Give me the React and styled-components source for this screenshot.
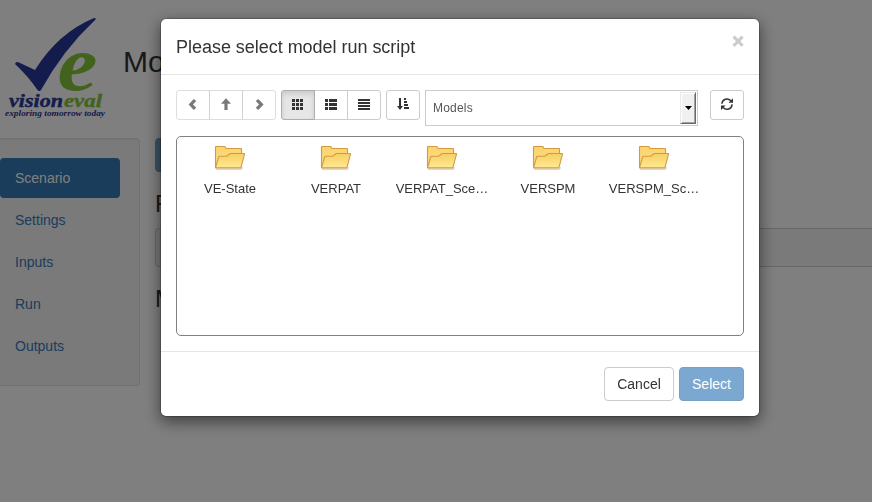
import React from "react";
import styled, { createGlobalStyle, css } from "styled-components";

const Global = createGlobalStyle`
  * { box-sizing: border-box; }
  body {
    margin: 0;
    height: 502px;
    overflow: hidden;
    background: #fff;
    color: #333;
    font: 14px/20px "Liberation Sans", Arial, sans-serif;
  }
  #root { height: 100%; }
`;

const Page = styled.div`
  height: 502px;
  width: 872px;
  overflow: hidden;
`;

const Masthead = styled.header`
  display: flex;
  height: 138px;
`;

const Logo = styled.svg`
  flex: none;
  width: 123px;
  height: 130px;
`;

const PageTitle = styled.h1`
  margin: 44px 0 0;
  font-size: 30px;
  font-weight: 400;
  line-height: 36px;
  white-space: nowrap;
`;

const Columns = styled.div`
  display: flex;
  gap: 15px;
`;

const Sidebar = styled.nav`
  flex: none;
  width: 140px;
  height: 248px;
  padding: 19px 19px 19px 0;
  display: flex;
  flex-direction: column;
  gap: 2px;
  background: #f5f5f5;
  border: 1px solid #e3e3e3;
  border-left: 0;
  border-radius: 0 4px 4px 0;
  box-shadow: inset 0 1px 1px rgba(0, 0, 0, 0.05);
`;

const NavItem = styled.a`
  padding: 10px 15px;
  border-radius: 4px;
  color: ${(p) => (p.$active ? "#fff" : "#337ab7")};
  background: ${(p) => (p.$active ? "#337ab7" : "transparent")};
`;

const Main = styled.main`
  flex: 1;
  min-width: 0;
`;

const PageButton = styled.button`
  display: block;
  width: 150px;
  height: 34px;
  border: 1px solid #2e6da4;
  border-radius: 4px;
  background: #337ab7;
  opacity: 0.65;
`;

const SectionTitle = styled.h3`
  margin: 19px 0 11px;
  font-size: 24px;
  font-weight: 400;
  line-height: 26px;
`;

const PathField = styled.div`
  height: 39px;
  width: 760px;
  background: #f5f5f5;
  border: 1px solid #ccc;
  border-radius: 4px;
`;

const Backdrop = styled.div`
  position: fixed;
  inset: 0;
  padding-top: 18px;
  display: flex;
  align-items: flex-start;
  background: rgba(0, 0, 0, 0.5);
`;

const Dialog = styled.section`
  width: 600px;
  margin-left: 160px;
  background: #fff;
  background-clip: padding-box;
  border: 1px solid rgba(0, 0, 0, 0.2);
  border-radius: 6px;
  box-shadow: 0 5px 15px rgba(0, 0, 0, 0.5);
`;

const DialogHeader = styled.header`
  display: flex;
  justify-content: space-between;
  padding: 15px;
  height: 56px;
  border-bottom: 1px solid #e5e5e5;
`;

const DialogTitle = styled.h4`
  margin: 0;
  font-size: 18px;
  font-weight: 400;
  line-height: 26px;
  letter-spacing: -0.03px;
`;

const CloseButton = styled.button`
  padding: 0;
  border: 0;
  height: 14px;
  background: none;
  color: #ccc;
  font: bold 20px/14px "Liberation Sans", Arial, sans-serif;
  -webkit-text-stroke: 0.8px #ccc;
`;

const DialogBody = styled.div`
  padding: 15px;
`;

const Toolbar = styled.div`
  display: flex;
  align-items: flex-start;
  gap: 5px;
  height: 46px;
`;

const ToolButton = styled.button`
  width: 34px;
  height: 30px;
  padding: 0 0 2px;
  display: flex;
  align-items: center;
  justify-content: center;
  background: #fff;
  border: 1px solid #ccc;
  border-radius: 3px;
  color: #333;
  ${(p) => p.$disabled && css`opacity: 0.65;`}
  ${(p) => p.$active && css`
    position: relative;
    z-index: 1;
    background: #e6e6e6;
    border-color: #adadad;
    box-shadow: inset 0 3px 5px rgba(0, 0, 0, 0.125);
  `}
  ${(p) => p.$push && css`margin-left: auto;`}
`;

const ButtonGroup = styled.div`
  display: flex;

  ${ToolButton}:not(:first-child) {
    margin-left: -1px;
    border-top-left-radius: 0;
    border-bottom-left-radius: 0;
  }
  ${ToolButton}:not(:last-child) {
    border-top-right-radius: 0;
    border-bottom-right-radius: 0;
  }
`;

const VolumeSelect = styled.div`
  width: 273px;
  height: 36px;
  padding: 1px 1px 1px 7px;
  display: flex;
  align-items: center;
  justify-content: space-between;
  border: 1px solid #ccc;
  color: #555;
  font-size: 12px;
  letter-spacing: 0.2px;
`;

const SelectArrow = styled.span`
  width: 16px;
  height: 32px;
  display: flex;
  align-items: center;
  justify-content: center;
  background: #f0f0f0;
  border: 1px solid;
  border-color: #e8e8e8 #696969 #696969 #e8e8e8;
  box-shadow: inset 1px 1px #fff, inset -1px -1px #a0a0a0;
`;

const FileList = styled.div`
  height: 200px;
  padding: 2px 0 0;
  display: flex;
  align-items: flex-start;
  border: 1px solid #808080;
  border-radius: 5px;
`;

const FileItem = styled.div`
  width: 106px;
  height: 64px;
  padding-top: 6px;
  display: flex;
  flex-direction: column;
  align-items: center;
  gap: 9px;
  font-size: 13px;
  line-height: 18px;
  white-space: nowrap;
`;

const DialogFooter = styled.footer`
  display: flex;
  justify-content: flex-end;
  gap: 5px;
  padding: 15px;
  border-top: 1px solid #e5e5e5;
`;

const ActionButton = styled.button`
  width: ${(p) => (p.$primary ? 65 : 70)}px;
  height: 34px;
  padding: 0;
  border: 1px solid ${(p) => (p.$primary ? "#2e6da4" : "#ccc")};
  border-radius: 4px;
  background: ${(p) => (p.$primary ? "#337ab7" : "#fff")};
  color: ${(p) => (p.$primary ? "#fff" : "#333")};
  opacity: ${(p) => (p.$primary ? 0.65 : 1)};
  font: 14px/20px "Liberation Sans", Arial, sans-serif;
`;

const Glyph = ({ children }) => (
  <svg width="12" height="14" viewBox="0 -1 12 14" fill="currentColor">{children}</svg>
);

const icons = {
  left: <path d="M6.8 .9 9.2 3 6 6.4 9.2 9.8 6.8 11.9 1.6 6.4z" />,
  up: <path d="M6 .2 11 5.8H7.6V12H4.4V5.8H1z" />,
  right: <path d="M5.2 .9 2.8 3 6 6.4 2.8 9.8 5.2 11.9 10.6 6.4z" />,
  grid: <path d="M0 1h3v3H0zM4 1h3v3H4zM8 1h3v3H8zM0 5h3v3H0zM4 5h3v3H4zM8 5h3v3H8zM0 9h3v3H0zM4 9h3v3H4zM8 9h3v3H8z" />,
  details: <path d="M0 1h3v3H0zM4 1h8v3H4zM0 5h3v3H0zM4 5h8v3H4zM0 9h3v3H0zM4 9h8v3H4z" />,
  lines: <path d="M0 1h12v2H0zM0 4h12v2H0zM0 7h12v2H0zM0 10h12v2H0z" />,
  sort: <path d="M2 0h2v8h2L3 12 0 8h2zM7 0h2v2H7zM7 3h3v2H7zM7 6h4v2H7zM7 9h5v2H7z" />,
  refresh: (
    <>
      <path d="M.9 5.8A5.1 5.1 0 0 1 9.8 2.7M11.1 6.4A5.1 5.1 0 0 1 2.2 9.5" fill="none" stroke="currentColor" strokeWidth="1.5" />
      <path d="M12 .3V4.8H7.5zM0 11.9V7.4h4.5z" />
    </>
  ),
};

const Tool = ({ icon, ...rest }) => (
  <ToolButton {...rest} aria-label={icon}><Glyph>{icons[icon]}</Glyph></ToolButton>
);

const FolderIcon = () => (
  <svg width="32" height="26" viewBox="0 0 32 26">
    <defs>
      <linearGradient id="folderBack" x2="0" y2="1">
        <stop stopColor="#fbd36b" />
        <stop offset="1" stopColor="#fbe08d" />
      </linearGradient>
      <linearGradient id="folderFront" x2="0" y2="1">
        <stop stopColor="#f7cf62" />
        <stop offset="1" stopColor="#ffe994" />
      </linearGradient>
    </defs>
    <path d="M2 24.2h25.5l1-2" fill="none" stroke="#000" strokeOpacity=".2" strokeWidth="1.2" />
    <path d="M1.5 22.5V2q0-.5.5-.5h8.5q.5 0 .7.6l.8 1.4H27q.5 0 .5.5v5" fill="url(#folderBack)" stroke="#d39a43" strokeWidth="1.1" />
    <path d="M1.6 22.6 4.6 12q.2-.7.9-.7h7.2l3.2-2.5q.3-.3.8-.3h13.3q.6 0 .5.6l-3.5 13.2q-.2.6-.8.6H2q-.5 0-.4-.3z" fill="url(#folderFront)" stroke="#d39a43" strokeWidth="1.1" />
  </svg>
);

const VisionEvalLogo = () => (
  <Logo viewBox="0 0 123 130" fontFamily="'Liberation Serif', 'Times New Roman', serif" fontStyle="italic" fontWeight="bold">
    <path d="M15 64Q16 61 19 62.5L35 70Q58 33 94 18Q97 18 95 20Q63 50 41 90Q39 92 37.5 90Q28 76 15 64z" fill="#28379a" />
    <text x="57.5" y="89.5" fontSize="79" textLength="40" lengthAdjust="spacingAndGlyphs" fill="#87c53b">e</text>
    <text x="9" y="107" fontSize="19.5" textLength="54" lengthAdjust="spacingAndGlyphs" fill="#28379a" stroke="#28379a" strokeWidth=".4">vision</text>
    <text x="64" y="107" fontSize="19.5" textLength="38" lengthAdjust="spacingAndGlyphs" fill="#87c53b" stroke="#87c53b" strokeWidth=".4">eval</text>
    <text x="5" y="115.5" fontSize="9" textLength="100" lengthAdjust="spacingAndGlyphs" fill="#28379a">exploring tomorrow today</text>
  </Logo>
);

const navigation = ["Scenario", "Settings", "Inputs", "Run", "Outputs"];
const folders = ["VE-State", "VERPAT", "VERPAT_Sce…", "VERSPM", "VERSPM_Sc…"];

export default function App() {
  return (
    <>
      <Global />
      <Page>
        <Masthead>
          <VisionEvalLogo />
          <PageTitle>Mo</PageTitle>
        </Masthead>
        <Columns>
          <Sidebar>
            {navigation.map((label, i) => <NavItem key={label} $active={i === 0}>{label}</NavItem>)}
          </Sidebar>
          <Main>
            <PageButton />
            <SectionTitle>F</SectionTitle>
            <PathField />
            <SectionTitle>M</SectionTitle>
          </Main>
        </Columns>
      </Page>
      <Backdrop>
        <Dialog role="dialog">
          <DialogHeader>
            <DialogTitle>Please select model run script</DialogTitle>
            <CloseButton>×</CloseButton>
          </DialogHeader>
          <DialogBody>
            <Toolbar>
              <ButtonGroup>
                <Tool icon="left" $disabled />
                <Tool icon="up" $disabled />
                <Tool icon="right" $disabled />
              </ButtonGroup>
              <ButtonGroup>
                <Tool icon="grid" $active />
                <Tool icon="details" />
                <Tool icon="lines" />
              </ButtonGroup>
              <Tool icon="sort" />
              <VolumeSelect>
                Models
                <SelectArrow>
                  <svg width="7" height="4" viewBox="0 0 7 4"><path d="M0 0h7L3.5 4z" /></svg>
                </SelectArrow>
              </VolumeSelect>
              <Tool icon="refresh" $push />
            </Toolbar>
            <FileList>
              {folders.map((name) => <FileItem key={name}><FolderIcon />{name}</FileItem>)}
            </FileList>
          </DialogBody>
          <DialogFooter>
            <ActionButton>Cancel</ActionButton>
            <ActionButton $primary>Select</ActionButton>
          </DialogFooter>
        </Dialog>
      </Backdrop>
    </>
  );
}
